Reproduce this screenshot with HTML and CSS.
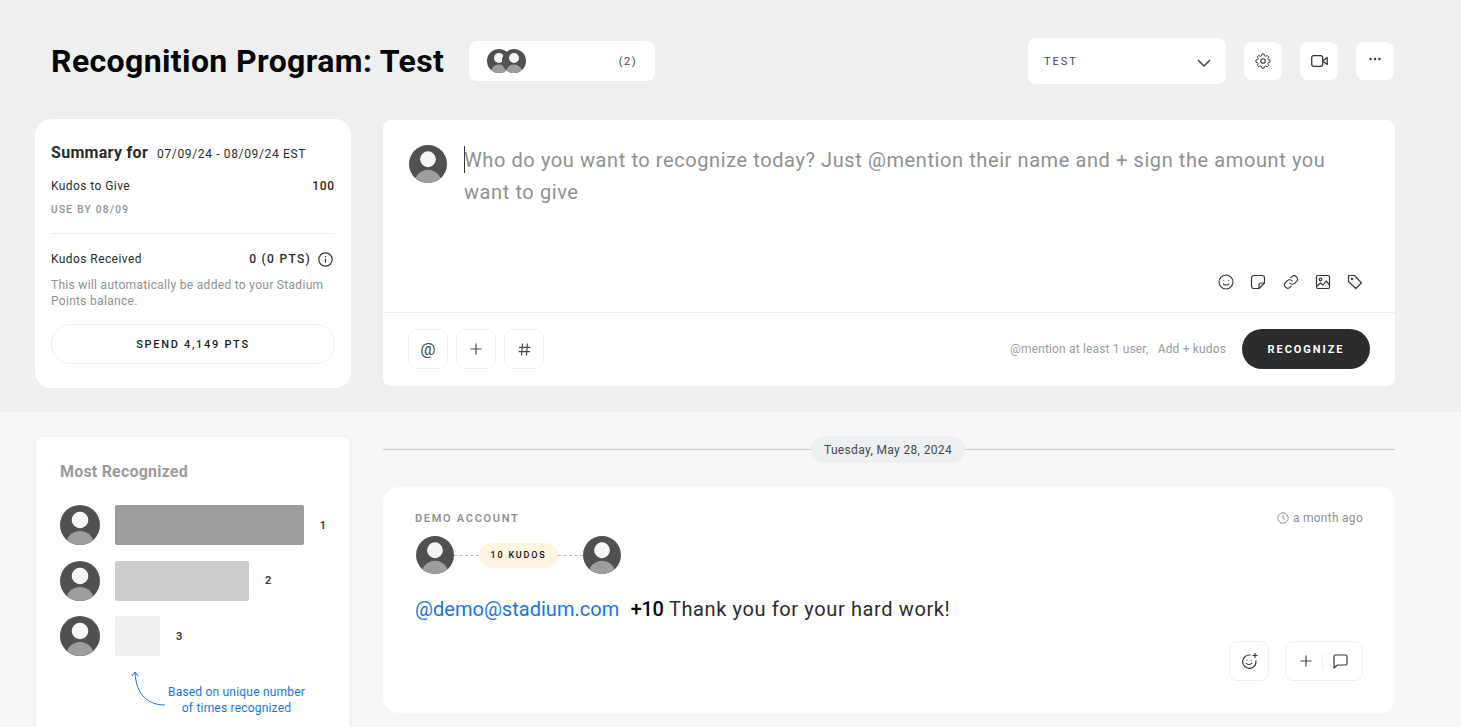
FILE: index.html
```html
<!DOCTYPE html>
<html lang="en">
<head>
<meta charset="utf-8">
<title>Recognition Program: Test</title>
<link rel="stylesheet" href="styles.css">
</head>
<body>
<svg class="defs" width="0" height="0" aria-hidden="true">
  <defs>
    <clipPath id="av"><circle cx="20" cy="20" r="20"/></clipPath>
    <symbol id="avatar" viewBox="0 0 40 40">
      <g clip-path="url(#av)">
        <rect width="40" height="40" fill="#4f5052"/>
        <circle cx="20" cy="15" r="8.300" fill="#f6f6f6"/>
        <ellipse cx="20" cy="40" rx="14" ry="14" fill="#9c9d9e"/>
      </g>
    </symbol>
  </defs>
</svg>
<section class="top">
  <header class="header">
    <h1 class="title">Recognition Program: Test</h1>
    <div class="members">
      <div class="member-avatars">
        <svg class="av-mini"><use href="#avatar"/></svg>
        <svg class="av-mini av-over"><use href="#avatar"/></svg>
      </div>
      <span class="member-count">(2)</span>
    </div>
    <div class="header-right">
      <div class="select">
        <span>TEST</span>
        <svg class="chev" width="14" height="8" viewBox="0 0 14 8"><path d="M1 1l6 6 6-6" fill="none" stroke="#46484b" stroke-width="1.5"/></svg>
      </div>
      <button class="sq-btn" type="button" aria-label="Settings">
        <svg width="18" height="18" viewBox="0 0 24 24" fill="none" stroke="#35373a" stroke-width="1.500" stroke-linejoin="round"><circle cx="12" cy="12" r="3"/><path d="M10.300 2.500h3.400l.5 2.700 2.100.9 2.300-1.500 2.400 2.400-1.500 2.300.9 2.100 2.700.5v3.400l-2.700.5-.9 2.100 1.500 2.300-2.400 2.400-2.300-1.500-2.100.9-.5 2.700h-3.400l-.5-2.700-2.100-.9-2.300 1.500-2.400-2.400 1.500-2.300-.9-2.100-2.700-.5v-3.400l2.700-.5.9-2.100-1.500-2.300 2.400-2.400 2.300 1.500 2.100-.9z" transform="translate(1.800 .6) scale(.85)"/></svg>
      </button>
      <button class="sq-btn" type="button" aria-label="Video">
        <svg width="17" height="12" viewBox="0 0 17 12" fill="none" stroke="#35373a" stroke-width="1.300" stroke-linejoin="round"><rect x=".7" y=".7" width="11" height="10.600" rx="2"/><path d="M11.700 6l4.500-3.500v7z"/></svg>
      </button>
      <button class="sq-btn sq-dots" type="button" aria-label="More">
        <svg width="12" height="4" viewBox="0 0 12 4" fill="#35373a"><circle cx="1.500" cy="2" r="1.200"/><circle cx="6" cy="2" r="1.200"/><circle cx="10.500" cy="2" r="1.200"/></svg>
      </button>
    </div>
  </header>
  <div class="top-grid">
    <aside class="summary">
      <div class="summary-head"><strong>Summary for</strong><span>07/09/24 - 08/09/24 EST</span></div>
      <div class="row row-give"><span>Kudos to Give</span><b>100</b></div>
      <div class="use-by">USE BY 08/09</div>
      <hr class="rule">
      <div class="row"><span>Kudos Received</span>
        <span class="received"><b>0 (0 PTS)</b>
          <svg width="15" height="15" viewBox="0 0 15 15" fill="none" stroke="#35373a" stroke-width="1.200"><circle cx="7.500" cy="7.500" r="6.700"/><path d="M7.500 6.800v4M7.500 4v1.200"/></svg>
        </span>
      </div>
      <p class="note">This will automatically be added to your Stadium Points balance.</p>
      <button class="spend" type="button">SPEND 4,149 PTS</button>
    </aside>
    <section class="composer">
      <div class="composer-body">
        <svg class="av-38"><use href="#avatar"/></svg>
        <p class="placeholder">Who do you want to recognize today? Just @mention their name and + sign the amount you want to give</p>
      </div>
      <div class="tools">
        <svg width="16" height="16" viewBox="0 0 16 16" fill="none" stroke="#35373a" stroke-width="1.100"><circle cx="8" cy="8" r="7"/><path d="M5 9.600c1.600 2 4.400 2 6 0M5.700 6v.8M10.300 6v.8"/></svg>
        <svg width="16" height="16" viewBox="0 0 16 16" fill="none" stroke="#35373a" stroke-width="1.200" stroke-linejoin="round"><path d="M4 1.500h8A2.500 2.500 0 0 1 14.500 4v5L9 14.500H4A2.500 2.500 0 0 1 1.500 12V4A2.500 2.500 0 0 1 4 1.500z"/><path d="M14.500 9H11a2 2 0 0 0-2 2v3.500"/></svg>
        <svg width="16" height="16" viewBox="0 0 24 24" fill="none" stroke="#35373a" stroke-width="1.700" stroke-linecap="round"><path d="M10 13.500a5 5 0 0 0 7.500.5l3-3A5 5 0 0 0 13.400 4l-1.700 1.700"/><path d="M14 10.500a5 5 0 0 0-7.500-.5l-3 3a5 5 0 0 0 7.100 7l1.700-1.700"/></svg>
        <svg width="16" height="16" viewBox="0 0 16 16" fill="none" stroke="#35373a" stroke-width="1.200" stroke-linejoin="round"><rect x="1.500" y="1.500" width="13" height="13" rx="1.500"/><circle cx="5.500" cy="5.500" r="1.300"/><path d="M1.500 12.500l4-3.500 2.500 2 3-4 3.500 4"/></svg>
        <svg width="16" height="16" viewBox="0 0 16 16" fill="none" stroke="#35373a" stroke-width="1.200" stroke-linejoin="round"><path d="M1.500 2.500a1 1 0 0 1 1-1h5l7 7.300-5.700 5.700-7.300-7z"/><circle cx="5" cy="5" r=".6"/></svg>
      </div>
      <div class="composer-foot">
        <button class="ghost-btn" type="button" aria-label="Mention"><span>@</span></button>
        <button class="ghost-btn" type="button" aria-label="Add"><svg width="12" height="12" viewBox="0 0 12 12" stroke="#46484b" stroke-width="1.200"><path d="M6 .5v11M.5 6h11"/></svg></button>
        <button class="ghost-btn" type="button" aria-label="Tag"><svg width="13" height="13" viewBox="0 0 13 13" stroke="#46484b" stroke-width="1.200"><path d="M4.500.5l-1 12M9.500.5l-1 12M1 4.300h11.500M.5 8.700H12"/></svg></button>
        <span class="hint">@mention at least 1 user,&nbsp;&nbsp; Add + kudos</span>
        <button class="recognize" type="button">RECOGNIZE</button>
      </div>
    </section>
  </div>
</section>
<section class="bottom">
  <aside class="chart">
    <h2 class="chart-title">Most Recognized</h2>
    <div class="chart-row"><svg class="av-40"><use href="#avatar"/></svg><div class="bar bar-1"></div><b>1</b></div>
    <div class="chart-row"><svg class="av-40"><use href="#avatar"/></svg><div class="bar bar-2"></div><b>2</b></div>
    <div class="chart-row"><svg class="av-40"><use href="#avatar"/></svg><div class="bar bar-3"></div><b>3</b></div>
    <div class="annot">
      <svg width="36" height="36" viewBox="0 0 36 36" fill="none" stroke="#1a76e3" stroke-width="1"><path d="M34 35C18 35 5 26 4 2M1 6l3-4 3 4"/></svg>
      <p>Based on unique number<br>of times recognized</p>
    </div>
  </aside>
  <div class="feed">
    <div class="date-line"><span>Tuesday, May 28, 2024</span></div>
    <article class="post">
      <div class="post-head"><span class="account">DEMO ACCOUNT</span>
        <span class="ago"><svg width="12" height="12" viewBox="0 0 12 12" fill="none" stroke="#8f9092" stroke-width="1"><circle cx="6" cy="6" r="5.200"/><path d="M6 3v3.200l2 1.200"/></svg>a month ago</span>
      </div>
      <div class="transfer">
        <svg class="av-38"><use href="#avatar"/></svg>
        <i class="dash"></i><span class="kudos">10 KUDOS</span><i class="dash"></i>
        <svg class="av-38"><use href="#avatar"/></svg>
      </div>
      <p class="message"><a class="mention">@demo@stadium.com</a><b>+10</b> Thank you for your hard work!</p>
      <div class="post-actions">
        <button class="ghost-btn" type="button" aria-label="React"><svg width="17" height="17" viewBox="0 0 17 17" fill="none" stroke="#35373a" stroke-width="1.200"><path d="M9.500 2.100A6.700 6.700 0 1 0 14.900 7.500M5 10c1.500 2 4.500 2 6 0M5.800 7v.8M10.200 7v.8M14 0v5M11.500 2.500h5"/></svg></button>
        <div class="double">
          <svg width="12" height="12" viewBox="0 0 12 12" stroke="#46484b" stroke-width="1.200"><path d="M6 .5v11M.5 6h11"/></svg>
          <i class="vr"></i>
          <svg width="15" height="15" viewBox="0 0 15 15" fill="none" stroke="#35373a" stroke-width="1.200" stroke-linejoin="round"><path d="M1 2.500A1.500 1.500 0 0 1 2.500 1h10A1.500 1.500 0 0 1 14 2.500v7a1.500 1.500 0 0 1-1.500 1.500H4.500L1 14z"/></svg>
        </div>
      </div>
    </article>
  </div>
</section>
</body>
</html>
```
FILE: styles.css
```css
* { box-sizing: border-box; }
html, body { margin: 0; height: 727px; overflow: hidden; }
body { font-family: Roboto, "Liberation Sans", sans-serif; color: #2b2c2e; background: #f7f7f7; }
.defs { position: absolute; }
button { font-family: inherit; padding: 0; cursor: pointer; }
p, h1, h2 { margin: 0; }
b { font-weight: 600; }

.top { background: #eeeff1; height: 412px; padding: 38px 66px 0 35px; overflow: hidden; }
.header { display: flex; align-items: center; height: 46px; padding-left: 16px; }
.title { font-size: 32px; line-height: 46px; font-weight: 700; color: #050505; letter-spacing: .38px; width: 418px; white-space: nowrap; }
.members { width: 186px; height: 40px; background: #fff; border-radius: 8px; display: flex; align-items: center; justify-content: space-between; padding: 0 18px; }
.member-avatars { display: flex; }
.av-mini { width: 24px; height: 24px; display: block; }
.av-over { margin-left: -9px; }
.member-count { font-size: 11px; letter-spacing: 1.500px; color: #46484b; }
.header-right { margin-left: auto; display: flex; align-items: center; gap: 18px; margin-right: 1px; }
.select { width: 198px; height: 46px; background: #fff; border-radius: 8px; display: flex; align-items: center; justify-content: space-between; padding: 0 15px 0 16px; font-size: 11px; letter-spacing: 2px; color: #46484b; }
.chev { margin-top: 4px; }
.sq-btn { width: 38px; height: 38px; border: 0; background: #fff; border-radius: 8px; display: flex; align-items: center; justify-content: center; }
.sq-dots svg { margin-bottom: 4px; }

.top-grid { display: grid; grid-template-columns: 316px 1012px; gap: 32px; margin-top: 35px; align-items: start; }
.summary { background: #fff; border-radius: 16px; height: 269px; padding: 24px 16px 0; }
.summary-head { display: flex; align-items: baseline; gap: 9px; font-size: 12px; letter-spacing: .65px; height: 18px; }
.summary-head strong { font-size: 16px; font-weight: 700; letter-spacing: .3px; }
.row { display: flex; justify-content: space-between; align-items: center; font-size: 12px; letter-spacing: .42px; height: 16px; }
.row b { letter-spacing: 1.300px; font-weight: 500; }
.row-give { margin-top: 17px; }
.row-give b { letter-spacing: .8px; }
.use-by { font-size: 10px; font-weight: 500; letter-spacing: 1.350px; color: #8f9092; margin-top: 9px; line-height: 14px; }
.rule { border: 0; border-top: 1px solid #eeeff1; margin: 16px 0 17px; }
.received { display: flex; align-items: center; gap: 7px; margin-right: 2px; }
.note { font-size: 12px; line-height: 16px; color: #8f9092; letter-spacing: .3px; margin-top: 10px; }
.spend { display: block; width: 100%; height: 40px; margin-top: 15px; background: #fff; border: 1px solid #eeeff1; border-radius: 20px; font-size: 11px; font-weight: 500; letter-spacing: 1.700px; color: #1c1d1f; }

.composer { background: #fff; border-radius: 8px; height: 266px; margin-top: 1px; display: flex; flex-direction: column; }
.composer-body { display: flex; gap: 17px; padding: 25px 60px 0 26px; height: 154px; }
.av-38 { width: 38px; height: 38px; flex: none; display: block; }
.placeholder { font-size: 20px; line-height: 32px; color: #8f9092; letter-spacing: .59px; margin-top: -1px; position: relative; }
.placeholder::before { content: ""; position: absolute; left: 0; top: 2px; width: 1px; height: 27px; background: #35373a; }
.tools { display: flex; justify-content: flex-end; gap: 16.200px; padding-right: 32px; height: 38px; }
.tools svg { display: block; }
.composer-foot { flex: 1; border-top: 1px solid #eeeff1; display: flex; align-items: flex-start; gap: 8px; padding: 16px 25px 0; }
.ghost-btn { width: 40px; height: 40px; background: #fff; border: 1px solid #eeeff1; border-radius: 8px; display: flex; align-items: center; justify-content: center; font-size: 17px; color: #46484b; }
.hint { margin-left: auto; margin-right: 8px; font-size: 12px; line-height: 40px; color: #9a9b9d; letter-spacing: .15px; }
.recognize { width: 128px; height: 40px; border: 0; border-radius: 20px; background: #2b2c2e; color: #fff; font-size: 11px; font-weight: 700; letter-spacing: 1.950px; }

.bottom { display: grid; grid-template-columns: 316px 1012px; gap: 32px; padding: 24px 0 0 35px; align-items: start; }
.chart { background: #fff; border: 1px solid #eeeff1; border-radius: 8px; height: 330px; padding: 25px 24px 0; }
.chart-title { font-size: 16px; line-height: 20px; font-weight: 700; color: #9a9b9d; letter-spacing: .2px; margin-bottom: 23px; }
.chart-row { display: flex; align-items: center; margin-bottom: 15.500px; font-size: 11px; color: #35373a; }
.av-40 { width: 40px; height: 40px; flex: none; display: block; margin-right: 15px; }
.bar { height: 40px; border-radius: 2px; margin-right: 16px; }
.bar-1 { width: 190px; background: #9c9d9e; }
.bar-2 { width: 134px; background: #cbcccd; }
.bar-3 { width: 45px; background: #eeeff1; }
.annot { display: flex; align-items: flex-end; margin: -1.500px 0 0 71px; color: #1a76e3; font-size: 12px; line-height: 16px; text-align: center; letter-spacing: .2px; }
.annot svg { flex: none; margin-bottom: 10px; }
.annot p { white-space: nowrap; margin-left: 1px; }

.date-line { height: 27px; display: flex; align-items: center; justify-content: center; position: relative; margin-bottom: 24px; }
.date-line::before { content: ""; position: absolute; left: 0; right: 0; top: 13px; border-top: 1px solid #cbcccd; }
.date-line span { position: relative; background: #eeeff1; border-radius: 14px; height: 27px; line-height: 28px; width: 154px; margin-right: 2px; text-align: center; font-size: 12px; letter-spacing: .35px; color: #46484b; }
.post { background: #fff; border-radius: 16px; height: 226px; padding: 24px 32px 0; }
.post-head { display: flex; justify-content: space-between; align-items: center; height: 14px; }
.account { font-size: 11px; font-weight: 600; letter-spacing: 1.700px; color: #8f9092; }
.ago { display: flex; align-items: center; gap: 4px; font-size: 12px; letter-spacing: .27px; color: #8f9092; }
.transfer { display: flex; align-items: center; margin: 11px 0 0 1px; }
.dash { width: 25px; border-top: 1px dashed #bbbcbd; }
.kudos { width: 79px; height: 25px; border-radius: 13px; background: #fdf5e0; font-size: 9px; font-weight: 500; letter-spacing: 1.800px; line-height: 25px; text-align: center; color: #111; }
.message { font-size: 20px; line-height: 28px; letter-spacing: .62px; margin-top: 21px; color: #2b2c2e; }
.mention { color: #1a76e3; margin-right: 11.500px; letter-spacing: .02px; }
.message b { color: #050505; font-weight: 500; letter-spacing: -.3px; }
.post-actions { display: flex; justify-content: flex-end; gap: 16px; margin-top: 18px; }
.double { width: 78px; height: 40px; border: 1px solid #eeeff1; border-radius: 8px; display: flex; align-items: center; justify-content: center; gap: 10px; }
.vr { width: 1px; height: 16px; background: #eeeff1; }
```
